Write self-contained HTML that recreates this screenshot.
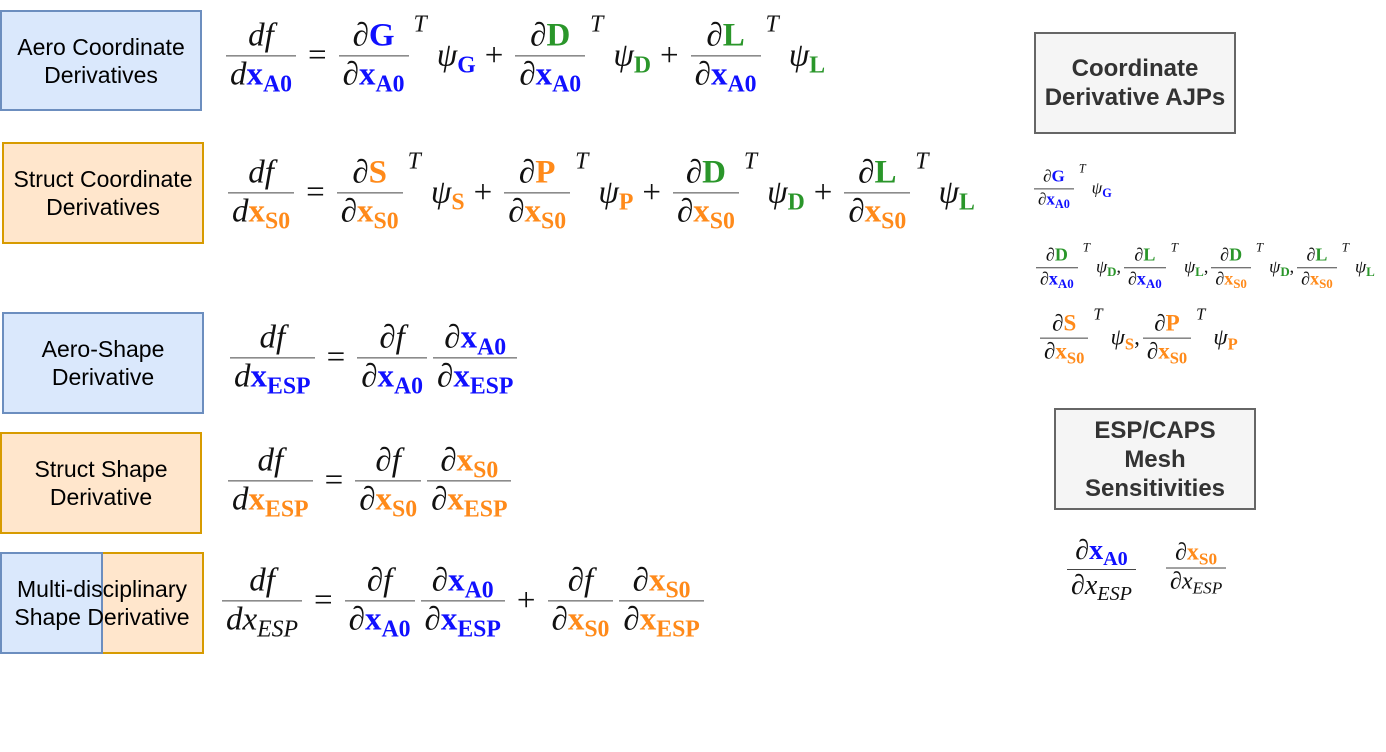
<!DOCTYPE html>
<html><head><meta charset="utf-8"><style>
body{margin:0;width:1386px;height:752px;background:#fff;position:relative;overflow:hidden}
.box{position:absolute;box-sizing:border-box;display:flex;align-items:center;justify-content:center;text-align:center;font-family:"Liberation Sans",sans-serif;font-size:23px;line-height:28px;color:#000;white-space:nowrap}
.bl{background:#dae8fc;border:2px solid #6c8ebf}
.or{background:#ffe6cc;border:2px solid #d79b00}
.gr{background:#f5f5f5;border:2px solid #666;color:#333;font-weight:bold;font-size:24px;line-height:29px}
.eq{position:absolute;display:flex;align-items:center;font-family:"Liberation Serif",serif;font-size:33px;transform:translateY(-50%);white-space:nowrap;color:#111}
.fr{display:inline-flex;flex-direction:column;align-items:center;margin:0 3px}
.fr>.n{border-bottom:1.6px solid #444;padding:0 5px 2px;line-height:1.1;align-self:stretch;text-align:center}
.fr>.d{line-height:1.15;padding:0 4px}
.T{align-self:flex-start;font-style:italic;font-size:0.72em;margin:-6px 10px 0 2px}
i{font-style:italic}
b{font-weight:bold}
sub{font-size:0.72em;font-weight:bold;vertical-align:-0.3em;line-height:0}
.B{color:#1010ff}.G{color:#2a962a}.O{color:#ff8a1a}
.op{margin:0 9px}
.ps{font-style:italic}
.ps sub{font-style:normal}
</style></head><body>

<div class="box bl" style="left:0;top:10px;width:202px;height:101px">Aero Coordinate<br>Derivatives</div>
<div class="box or" style="left:2px;top:142px;width:202px;height:102px">Struct Coordinate<br>Derivatives</div>
<div class="box bl" style="left:2px;top:312px;width:202px;height:102px">Aero-Shape<br>Derivative</div>
<div class="box or" style="left:0;top:432px;width:202px;height:102px">Struct Shape<br>Derivative</div>
<div class="box or" style="left:101px;top:552px;width:103px;height:102px"></div>
<div class="box bl" style="left:0;top:552px;width:103px;height:102px"></div>
<div class="box" style="left:0;top:552px;width:204px;height:102px">Multi-disciplinary<br>Shape Derivative</div>

<div class="box gr" style="left:1034px;top:32px;width:202px;height:102px">Coordinate<br>Derivative AJPs</div>
<div class="box gr" style="left:1054px;top:408px;width:202px;height:102px">ESP/CAPS<br>Mesh<br>Sensitivities</div>

<!-- row 1 -->
<div class="eq" style="left:223px;top:56px">
<span class="fr"><span class="n"><i>df</i></span><span class="d"><i>d</i><b class="B">x<sub>A0</sub></b></span></span>
<span class="op">=</span>
<span class="fr"><span class="n">∂<b class="B">G</b></span><span class="d">∂<b class="B">x<sub>A0</sub></b></span></span><span class="T">T</span>
<span class="ps">ψ<sub class="B">G</sub></span><span class="op">+</span>
<span class="fr"><span class="n">∂<b class="G">D</b></span><span class="d">∂<b class="B">x<sub>A0</sub></b></span></span><span class="T">T</span>
<span class="ps">ψ<sub class="G">D</sub></span><span class="op">+</span>
<span class="fr"><span class="n">∂<b class="G">L</b></span><span class="d">∂<b class="B">x<sub>A0</sub></b></span></span><span class="T">T</span>
<span class="ps">ψ<sub class="G">L</sub></span>
</div>

<!-- row 2 -->
<div class="eq" style="left:225px;top:193px">
<span class="fr"><span class="n"><i>df</i></span><span class="d"><i>d</i><b class="O">x<sub>S0</sub></b></span></span>
<span class="op">=</span>
<span class="fr"><span class="n">∂<b class="O">S</b></span><span class="d">∂<b class="O">x<sub>S0</sub></b></span></span><span class="T">T</span>
<span class="ps">ψ<sub class="O">S</sub></span><span class="op">+</span>
<span class="fr"><span class="n">∂<b class="O">P</b></span><span class="d">∂<b class="O">x<sub>S0</sub></b></span></span><span class="T">T</span>
<span class="ps">ψ<sub class="O">P</sub></span><span class="op">+</span>
<span class="fr"><span class="n">∂<b class="G">D</b></span><span class="d">∂<b class="O">x<sub>S0</sub></b></span></span><span class="T">T</span>
<span class="ps">ψ<sub class="G">D</sub></span><span class="op">+</span>
<span class="fr"><span class="n">∂<b class="G">L</b></span><span class="d">∂<b class="O">x<sub>S0</sub></b></span></span><span class="T">T</span>
<span class="ps">ψ<sub class="G">L</sub></span>
</div>

<!-- row 3 -->
<div class="eq" style="left:227px;top:358px">
<span class="fr"><span class="n"><i>df</i></span><span class="d"><i>d</i><b class="B">x<sub>ESP</sub></b></span></span>
<span class="op">=</span>
<span class="fr"><span class="n">∂<i>f</i></span><span class="d">∂<b class="B">x<sub>A0</sub></b></span></span>
<span class="fr"><span class="n">∂<b class="B">x<sub>A0</sub></b></span><span class="d">∂<b class="B">x<sub>ESP</sub></b></span></span>
</div>

<!-- row 4 -->
<div class="eq" style="left:225px;top:481px">
<span class="fr"><span class="n"><i>df</i></span><span class="d"><i>d</i><b class="O">x<sub>ESP</sub></b></span></span>
<span class="op">=</span>
<span class="fr"><span class="n">∂<i>f</i></span><span class="d">∂<b class="O">x<sub>S0</sub></b></span></span>
<span class="fr"><span class="n">∂<b class="O">x<sub>S0</sub></b></span><span class="d">∂<b class="O">x<sub>ESP</sub></b></span></span>
</div>

<!-- row 5 -->
<div class="eq" style="left:219px;top:601px">
<span class="fr"><span class="n"><i>df</i></span><span class="d"><i>dx<sub style="font-weight:normal">ESP</sub></i></span></span>
<span class="op">=</span>
<span class="fr"><span class="n">∂<i>f</i></span><span class="d">∂<b class="B">x<sub>A0</sub></b></span></span>
<span class="fr"><span class="n">∂<b class="B">x<sub>A0</sub></b></span><span class="d">∂<b class="B">x<sub>ESP</sub></b></span></span>
<span class="op">+</span>
<span class="fr"><span class="n">∂<i>f</i></span><span class="d">∂<b class="O">x<sub>S0</sub></b></span></span>
<span class="fr"><span class="n">∂<b class="O">x<sub>S0</sub></b></span><span class="d">∂<b class="O">x<sub>ESP</sub></b></span></span>
</div>

<!-- right small -->
<div class="eq" style="left:1031px;top:188px;font-size:17px">
<span class="fr"><span class="n">∂<b class="B">G</b></span><span class="d">∂<b class="B">x<sub>A0</sub></b></span></span><span class="T" style="margin-right:6px">T</span>
<span class="ps">ψ<sub class="B">G</sub></span>
</div>
<div class="eq" style="left:1033px;top:267px;font-size:18px">
<span class="fr"><span class="n">∂<b class="G">D</b></span><span class="d">∂<b class="B">x<sub>A0</sub></b></span></span><span class="T" style="margin-right:6px">T</span>
<span class="ps">ψ<sub class="G">D</sub></span>,
<span class="fr"><span class="n">∂<b class="G">L</b></span><span class="d">∂<b class="B">x<sub>A0</sub></b></span></span><span class="T" style="margin-right:6px">T</span>
<span class="ps">ψ<sub class="G">L</sub></span>,
<span class="fr"><span class="n">∂<b class="G">D</b></span><span class="d">∂<b class="O">x<sub>S0</sub></b></span></span><span class="T" style="margin-right:6px">T</span>
<span class="ps">ψ<sub class="G">D</sub></span>,
<span class="fr"><span class="n">∂<b class="G">L</b></span><span class="d">∂<b class="O">x<sub>S0</sub></b></span></span><span class="T" style="margin-right:6px">T</span>
<span class="ps">ψ<sub class="G">L</sub></span>
</div>
<div class="eq" style="left:1037px;top:338px;font-size:23px">
<span class="fr"><span class="n">∂<b class="O">S</b></span><span class="d">∂<b class="O">x<sub>S0</sub></b></span></span><span class="T" style="margin-right:8px">T</span>
<span class="ps">ψ<sub class="O">S</sub></span>,
<span class="fr"><span class="n">∂<b class="O">P</b></span><span class="d">∂<b class="O">x<sub>S0</sub></b></span></span><span class="T" style="margin-right:8px">T</span>
<span class="ps">ψ<sub class="O">P</sub></span>
</div>

<div class="eq" style="left:1064px;top:569px;font-size:28px">
<span class="fr"><span class="n">∂<b class="B">x<sub>A0</sub></b></span><span class="d">∂<i>x<sub style="font-weight:normal">ESP</sub></i></span></span>
</div>
<div class="eq" style="left:1163px;top:568px;font-size:24px">
<span class="fr"><span class="n">∂<b class="O">x<sub>S0</sub></b></span><span class="d">∂<i>x<sub style="font-weight:normal">ESP</sub></i></span></span>
</div>
</body></html>
